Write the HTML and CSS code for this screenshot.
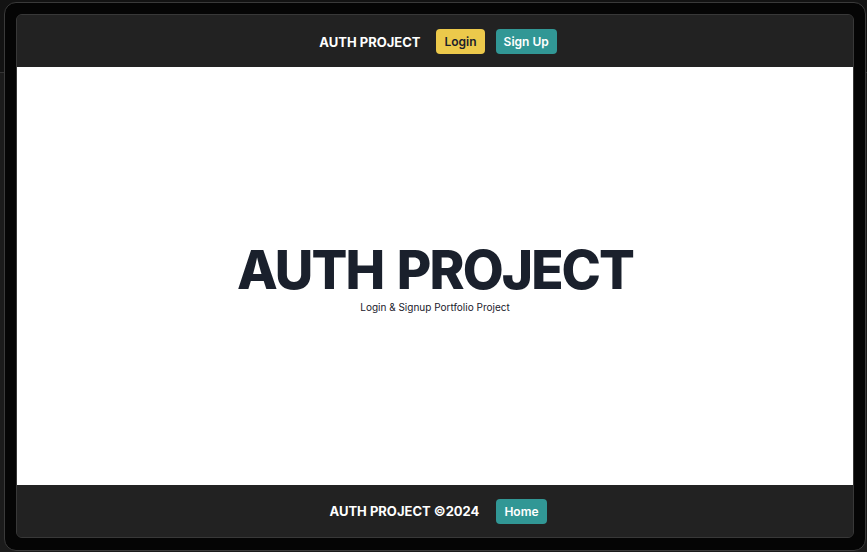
FILE: index.html
```html
<!DOCTYPE html>
<html lang="en">
<head>
<meta charset="utf-8">
<title>Auth Project</title>
<link rel="stylesheet" href="styles.css">
</head>
<body>
<div class="frame">
  <div class="window">
    <header class="bar top-bar">
      <span class="brand">AUTH PROJECT</span>
      <div class="actions">
        <button class="btn btn-yellow">Login</button>
        <button class="btn btn-teal">Sign Up</button>
      </div>
    </header>
    <main class="hero">
      <h1 class="hero-title">AUTH PROJECT</h1>
      <p class="hero-sub">Login &amp; Signup Portfolio Project</p>
    </main>
    <footer class="bar bottom-bar">
      <span class="brand">AUTH PROJECT ©2024</span>
      <button class="btn btn-teal">Home</button>
    </footer>
  </div>
</div>
</body>
</html>
```
FILE: styles.css
```css
* { box-sizing: border-box; }
html, body { height: 100%; }
body {
  margin: 0;
  padding: 2px 2px 2px 4px;
  background: linear-gradient(to bottom, #131313 0, #131313 72px, #343434 72px, #343434 73px, #1b1b1b 73px);
  font-family: Inter, "Noto Sans", sans-serif;
}
.frame {
  height: 549px;
  width: 862px;
  border: 1px solid #3a3a3a;
  border-radius: 12px;
  background: #050505;
  padding: 11px 11px 12px 11px;
  display: flex;
}
.window {
  flex: 1;
  display: flex;
  flex-direction: column;
  border: 1px solid #383838;
  border-radius: 6px;
  overflow: hidden;
  background: #222222;
}
.bar {
  display: flex;
  align-items: center;
  justify-content: center;
  background: #222222;
  color: #ffffff;
  padding-left: 6px;
}
.top-bar { height: 52px; padding-top: 1px; }
.bottom-bar { height: 52px; }
.brand {
  font-weight: 700;
  font-size: 13px;
}
.top-bar .brand { margin-right: 16px; }
.bottom-bar .brand { margin-right: 17px; }
.actions { display: flex; gap: 11px; }
.btn {
  font-family: Inter, "Noto Sans", sans-serif;
  font-weight: 600;
  font-size: 12px;
  height: 25px;
  padding: 0 8px;
  border: none;
  border-radius: 4px;
  cursor: pointer;
}
.btn-yellow { background: #ecc94b; color: #1a202c; }
.btn-teal { background: #319795; color: #ffffff; }
.hero {
  flex: 1;
  background: #ffffff;
  display: flex;
  flex-direction: column;
  align-items: center;
  justify-content: center;
  padding-top: 2px;
}
.hero-title {
  margin: 0;
  font-size: 53px;
  font-weight: 800;
  line-height: 1.15;
  color: #1a202c;
  letter-spacing: -1.9px;
  word-spacing: 4px;
}
.hero-sub {
  margin: 0;
  font-size: 10px;
  color: #1a202c;
  line-height: 1.4;
}
```
